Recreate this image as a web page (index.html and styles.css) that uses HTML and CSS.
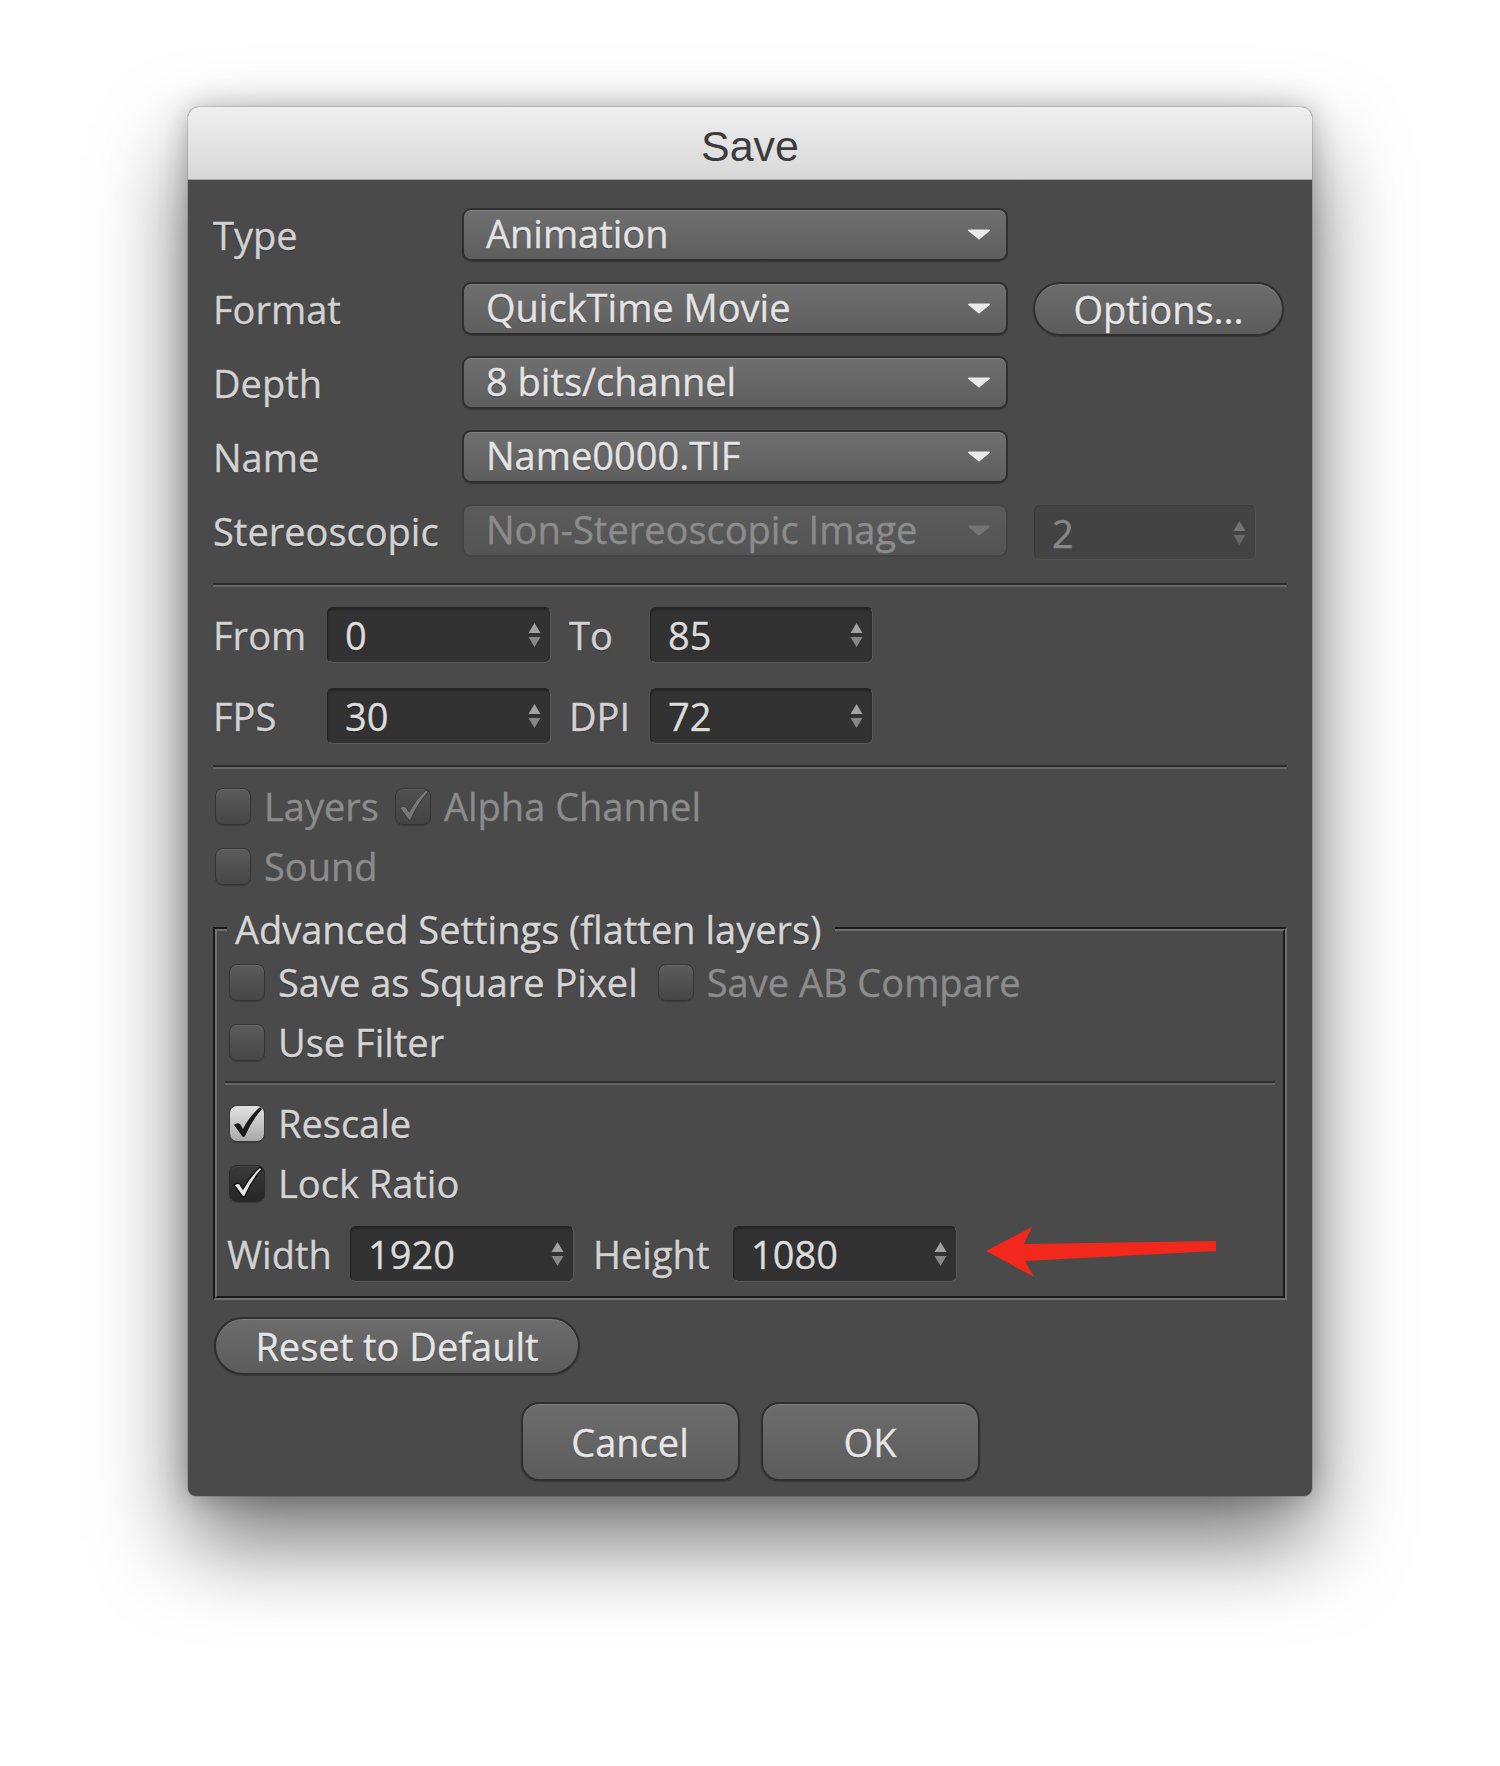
FILE: index.html
```html
<!DOCTYPE html>
<html>
<head>
<meta charset="utf-8">
<title>Save</title>
<link rel="stylesheet" href="styles.css">
</head>
<body>
<div class="dialog">
  <div class="titlebar">Save</div>
  <div class="content">
    <div class="main-grid">
      <div class="label">Type</div>
      <div class="dropdown"><span>Animation</span><svg class="caret" viewBox="0 0 26 12"><path d="M2 1.5 H24 L13 10.5 Z"/></svg></div>
      <div></div>

      <div class="label">Format</div>
      <div class="dropdown"><span>QuickTime Movie</span><svg class="caret" viewBox="0 0 26 12"><path d="M2 1.5 H24 L13 10.5 Z"/></svg></div>
      <div class="btn pill options">Options...</div>

      <div class="label">Depth</div>
      <div class="dropdown"><span>8 bits/channel</span><svg class="caret" viewBox="0 0 26 12"><path d="M2 1.5 H24 L13 10.5 Z"/></svg></div>
      <div></div>

      <div class="label">Name</div>
      <div class="dropdown"><span>Name0000.TIF</span><svg class="caret" viewBox="0 0 26 12"><path d="M2 1.5 H24 L13 10.5 Z"/></svg></div>
      <div></div>

      <div class="label">Stereoscopic</div>
      <div class="dropdown disabled"><span>Non-Stereoscopic Image</span><svg class="caret" viewBox="0 0 26 12"><path d="M2 1.5 H24 L13 10.5 Z"/></svg></div>
      <div class="field disabled stereo-num"><span>2</span><svg class="spin" viewBox="0 0 13 28"><path class="up" d="M0.5 12 L6.5 2 L12.5 12 Z"/><path class="down" d="M0.5 16 L6.5 26 L12.5 16 Z"/></svg></div>
    </div>

    <div class="sep sep1"></div>

    <div class="spin-grid">
      <div class="label">From</div>
      <div class="field"><span>0</span><svg class="spin" viewBox="0 0 13 28"><path class="up" d="M0.5 12 L6.5 2 L12.5 12 Z"/><path class="down" d="M0.5 16 L6.5 26 L12.5 16 Z"/></svg></div>
      <div class="label mid">To</div>
      <div class="field"><span>85</span><svg class="spin" viewBox="0 0 13 28"><path class="up" d="M0.5 12 L6.5 2 L12.5 12 Z"/><path class="down" d="M0.5 16 L6.5 26 L12.5 16 Z"/></svg></div>

      <div class="label">FPS</div>
      <div class="field"><span>30</span><svg class="spin" viewBox="0 0 13 28"><path class="up" d="M0.5 12 L6.5 2 L12.5 12 Z"/><path class="down" d="M0.5 16 L6.5 26 L12.5 16 Z"/></svg></div>
      <div class="label mid">DPI</div>
      <div class="field"><span>72</span><svg class="spin" viewBox="0 0 13 28"><path class="up" d="M0.5 12 L6.5 2 L12.5 12 Z"/><path class="down" d="M0.5 16 L6.5 26 L12.5 16 Z"/></svg></div>
    </div>

    <div class="sep sep2"></div>

    <div class="checks">
      <div class="check-row">
        <span class="cb"></span><span class="cb-label dim">Layers</span>
        <span class="cb cb-dimcheck next"><svg viewBox="0 0 36 36"><path d="M5 20 Q8 17 11 19 L14 24 Q20 12 31 2 L33 4 Q23 15 16 31 Q15 33 13 31 Z"/></svg></span><span class="cb-label dim">Alpha Channel</span>
      </div>
      <div class="check-row">
        <span class="cb"></span><span class="cb-label dim">Sound</span>
      </div>
    </div>

    <fieldset class="group">
      <legend>Advanced Settings (flatten layers)</legend>
      <div class="check-row">
        <span class="cb"></span><span class="cb-label">Save as Square Pixel</span>
        <span class="cb next2"></span><span class="cb-label dim">Save AB Compare</span>
      </div>
      <div class="check-row">
        <span class="cb"></span><span class="cb-label">Use Filter</span>
      </div>
      <div class="sep inner-sep"></div>
      <div class="check-row first-after-sep">
        <span class="cb cb-light"><svg viewBox="0 0 36 36"><path d="M5 20 Q8 17 11 19 L14 24 Q20 12 31 2 L33 4 Q23 15 16 31 Q15 33 13 31 Z"/></svg></span><span class="cb-label">Rescale</span>
      </div>
      <div class="check-row">
        <span class="cb cb-dark"><svg viewBox="0 0 36 36"><path d="M5 20 Q8 17 11 19 L14 24 Q20 12 31 2 L33 4 Q23 15 16 31 Q15 33 13 31 Z"/></svg></span><span class="cb-label">Lock Ratio</span>
      </div>
      <div class="size-row">
        <div class="label size-label">Width</div>
        <div class="field size-field"><span>1920</span><svg class="spin" viewBox="0 0 13 28"><path class="up" d="M0.5 12 L6.5 2 L12.5 12 Z"/><path class="down" d="M0.5 16 L6.5 26 L12.5 16 Z"/></svg></div>
        <div class="label size-label2">Height</div>
        <div class="field size-field"><span>1080</span><svg class="spin" viewBox="0 0 13 28"><path class="up" d="M0.5 12 L6.5 2 L12.5 12 Z"/><path class="down" d="M0.5 16 L6.5 26 L12.5 16 Z"/></svg></div>
        <svg class="arrow" viewBox="0 0 232 60"><path d="M0 27 L46 3 L38 20 L230 17 L230 27 L39 37 L48 53 Z"/></svg>
      </div>
    </fieldset>

    <div class="reset-row"><div class="btn pill reset">Reset to Default</div></div>

    <div class="actions">
      <div class="btn action">Cancel</div>
      <div class="btn action">OK</div>
    </div>
  </div>
</div>
</body>
</html>
```

FILE: styles.css
```css
html, body {
  margin: 0;
  padding: 0;
  background: #ffffff;
}

body {
  width: 1500px;
  height: 1766px;
  overflow: hidden;
  font-family: "Open Sans", "Noto Sans", "DejaVu Sans", sans-serif;
  font-weight: 500;
}

.dialog {
  margin: 107px 0 0 188px;
  width: 1124px;
  background: #4a4a4a;
  border-radius: 11px 11px 8px 8px;
  box-shadow: 0 45px 90px rgba(0, 0, 0, 0.55), 0 0 28px rgba(0, 0, 0, 0.25), 0 0 0 1px rgba(0, 0, 0, 0.12);
}

.titlebar {
  height: 72px;
  border-bottom: 1px solid #a3a3a3;
  border-radius: 11px 11px 0 0;
  background: linear-gradient(#efefef, #d8d8d8);
  text-align: center;
  font-family: "Liberation Sans", Arial, sans-serif;
  font-weight: 400;
  font-size: 43px;
  line-height: 78px;
  color: #3c3c3c;
}

.content {
  padding: 28px 25px 15px;
  -webkit-text-stroke: 0.35px currentColor;
}

.label {
  font-size: 38px;
  color: #d2d2d2;
  white-space: nowrap;
  text-shadow: 0 1px 1px rgba(0, 0, 0, 0.35);
}

/* ---------- top grid ---------- */
.main-grid {
  display: grid;
  grid-template-columns: 249px 546px auto;
  grid-auto-rows: 53px;
  row-gap: 21px;
  align-items: center;
}

.dropdown {
  height: 53px;
  box-sizing: border-box;
  display: flex;
  align-items: center;
  justify-content: space-between;
  padding: 0 15px 3px 22px;
  border: 2px solid #2f2f2f;
  border-radius: 9px;
  background: linear-gradient(#6f6f6f, #5e5e5e);
  box-shadow: inset 0 1px 0 rgba(255, 255, 255, 0.12), 0 1px 1px rgba(0, 0, 0, 0.25);
  font-size: 38px;
  color: #e4e4e4;
  text-shadow: 0 1px 1px rgba(0, 0, 0, 0.4);
  white-space: nowrap;
}

.dropdown .caret {
  margin-top: 3px;
}

.dropdown.disabled {
  background: linear-gradient(#5b5b5b, #545454);
  border-color: #444444;
  box-shadow: none;
  color: #8c8c8c;
  text-shadow: none;
}

.caret {
  width: 24px;
  height: 11px;
  fill: #e9e9e9;
  stroke: #e9e9e9;
  stroke-width: 2;
  stroke-linejoin: round;
}

.dropdown.disabled .caret {
  fill: #747474;
  stroke: #747474;
}

.btn {
  box-sizing: border-box;
  display: flex;
  align-items: center;
  justify-content: center;
  border: 2px solid #2f2f2f;
  background: linear-gradient(#6c6c6c, #5c5c5c);
  box-shadow: inset 0 1px 0 rgba(255, 255, 255, 0.12), 0 1px 1px rgba(0, 0, 0, 0.25);
  font-size: 38px;
  color: #e6e6e6;
  text-shadow: 0 1px 1px rgba(0, 0, 0, 0.4);
  white-space: nowrap;
}

.pill {
  border-radius: 29px;
}

.options {
  margin-left: 25px;
  width: 251px;
  height: 54px;
}

/* ---------- numeric fields ---------- */
.field {
  height: 56px;
  box-sizing: border-box;
  display: flex;
  align-items: center;
  justify-content: space-between;
  padding: 0 9px 0 17px;
  background: #323232;
  border: 1px solid;
  border-color: #242424 #5a5a5a #5a5a5a #242424;
  border-radius: 6px;
  box-shadow: inset 0 2px 2px rgba(0, 0, 0, 0.25);
  font-size: 38px;
  color: #dcdcdc;
  text-shadow: 0 1px 1px rgba(0, 0, 0, 0.4);
}

.field.disabled {
  background: #434343;
  border-color: #3a3a3a #525252 #525252 #3a3a3a;
  box-shadow: none;
  color: #878787;
  text-shadow: none;
}

.stereo-num {
  margin-left: 26px;
  width: 222px;
  height: 55px;
  margin-top: 4px;
}

.spin {
  width: 13px;
  height: 28px;
}

.spin .up { fill: #a2a2a2; }
.spin .down { fill: #878787; }

.field.disabled .spin .up { fill: #747474; }
.field.disabled .spin .down { fill: #686868; }

/* ---------- separators ---------- */
.sep {
  height: 0;
  border-top: 2px solid #2e2e2e;
  border-bottom: 2px solid #666666;
}

.sep1 { margin-top: 26px; }

.spin-grid {
  margin-top: 20px;
  display: grid;
  grid-template-columns: 114px 224px 99px 223px;
  grid-auto-rows: 56px;
  row-gap: 25px;
  align-items: center;
}

.label.mid {
  padding-left: 18px;
}

.sep2 { margin-top: 21px; }

/* ---------- checkboxes ---------- */
.checks {
  margin-top: 13px;
  display: flex;
  flex-direction: column;
  row-gap: 12px;
}

.check-row {
  height: 48px;
  display: flex;
  align-items: center;
}

.cb {
  flex: none;
  width: 36px;
  height: 37px;
  box-sizing: border-box;
  margin-left: 2px;
  margin-right: 13px;
  border: 1px solid #353535;
  border-radius: 8px;
  background: linear-gradient(#5c5c5c, #464646);
  box-shadow: inset 0 1px 0 rgba(255, 255, 255, 0.08), 0 1px 1px rgba(0, 0, 0, 0.2);
  display: flex;
  align-items: center;
  justify-content: center;
}

.cb svg {
  width: 36px;
  height: 36px;
  overflow: visible;
}

.cb.next { margin-left: 16px; }
.cb.next2 { margin-left: 20px; }

.cb-dimcheck {
  background: linear-gradient(#4f4f4f, #444444);
}
.cb-dimcheck svg path {
  fill: #787878;
  stroke: #3e3e3e;
  stroke-width: 1;
}

.cb-light {
  background: linear-gradient(#e2e2e2, #a9a9a9);
  border-color: #3a3a3a;
}
.cb-light svg path {
  fill: #1a1a1a;
}

.cb-dark {
  background: linear-gradient(#3a3a3a, #262626);
  border-color: #2a2a2a;
}
.cb-dark svg path {
  fill: #e6e6e6;
  stroke: #151515;
  stroke-width: 1.5;
  stroke-linejoin: round;
}

.cb-label {
  font-size: 38px;
  color: #d4d4d4;
  white-space: nowrap;
  text-shadow: 0 1px 1px rgba(0, 0, 0, 0.35);
}

.cb-label.dim {
  color: #8c8c8c;
  text-shadow: none;
}

/* ---------- group box ---------- */
.group {
  margin: 15px 0 0;
  padding: 5px 10px 14px 10px;
  border: 4px groove #707070;
  min-width: 0;
}

.group legend {
  margin-left: 0;
  padding: 0 14px 0 8px;
  font-size: 38px;
  line-height: 48px;
  color: #d6d6d6;
  text-shadow: 0 1px 1px rgba(0, 0, 0, 0.35);
  white-space: nowrap;
}

.group .check-row + .check-row {
  margin-top: 12px;
}

.inner-sep {
  margin: 15px -2px 0;
}

.group .check-row.first-after-sep {
  margin-top: 14px;
}

.size-row {
  margin-top: 19px;
  height: 56px;
  display: flex;
  align-items: center;
}

.size-label {
  width: 123px;
}

.size-field {
  width: 224px;
  flex: none;
}

.size-label2 {
  width: 140px;
  padding-left: 19px;
}

.arrow {
  margin-left: 29px;
  width: 232px;
  height: 60px;
  fill: #f3281c;
}

/* ---------- bottom buttons ---------- */
.reset-row {
  margin-top: 17px;
  display: flex;
}

.reset {
  width: 366px;
  height: 58px;
  margin-left: 1px;
}

.actions {
  margin-top: 27px;
  display: flex;
  justify-content: center;
  column-gap: 21px;
}

.action {
  width: 219px;
  height: 79px;
  border-radius: 18px;
}
```
